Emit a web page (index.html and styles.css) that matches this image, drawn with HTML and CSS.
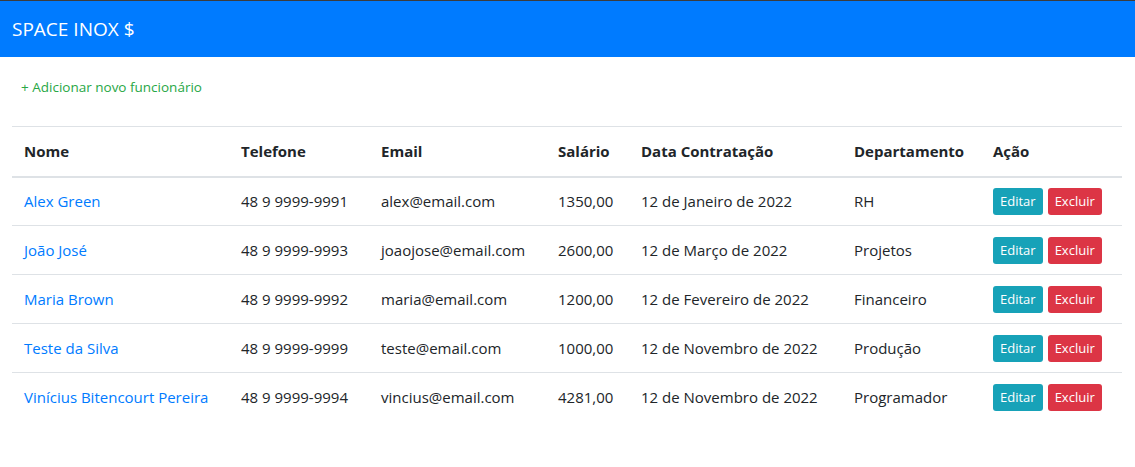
FILE: index.html
```html
<!DOCTYPE html>
<html lang="pt">
<head>
<meta charset="utf-8">
<title>Space Inox</title>
<link rel="stylesheet" href="styles.css">
</head>
<body>
<header class="navbar"><span class="brand">SPACE INOX $</span></header>
<main class="content">
  <a class="add-link" href="#">+ Adicionar novo funcionário</a>
  <table class="table">
    <colgroup>
      <col class="c1"><col class="c2"><col class="c3"><col class="c4"><col class="c5"><col class="c6"><col class="c7">
    </colgroup>
    <thead>
      <tr><th>Nome</th><th>Telefone</th><th>Email</th><th>Salário</th><th>Data Contratação</th><th>Departamento</th><th>Ação</th></tr>
    </thead>
    <tbody>
      <tr><td><a href="#">Alex Green</a></td><td>48 9 9999-9991</td><td>alex@email.com</td><td>1350,00</td><td>12 de Janeiro de 2022</td><td>RH</td><td class="actions"><button class="btn info">Editar</button><button class="btn danger">Excluir</button></td></tr>
      <tr><td><a href="#">João José</a></td><td>48 9 9999-9993</td><td>joaojose@email.com</td><td>2600,00</td><td>12 de Março de 2022</td><td>Projetos</td><td class="actions"><button class="btn info">Editar</button><button class="btn danger">Excluir</button></td></tr>
      <tr><td><a href="#">Maria Brown</a></td><td>48 9 9999-9992</td><td>maria@email.com</td><td>1200,00</td><td>12 de Fevereiro de 2022</td><td>Financeiro</td><td class="actions"><button class="btn info">Editar</button><button class="btn danger">Excluir</button></td></tr>
      <tr><td><a href="#">Teste da Silva</a></td><td>48 9 9999-9999</td><td>teste@email.com</td><td>1000,00</td><td>12 de Novembro de 2022</td><td>Produção</td><td class="actions"><button class="btn info">Editar</button><button class="btn danger">Excluir</button></td></tr>
      <tr><td><a href="#">Vinícius Bitencourt Pereira</a></td><td>48 9 9999-9994</td><td>vincius@email.com</td><td>4281,00</td><td>12 de Novembro de 2022</td><td>Programador</td><td class="actions"><button class="btn info">Editar</button><button class="btn danger">Excluir</button></td></tr>
    </tbody>
  </table>
</main>
</body>
</html>
```
FILE: styles.css
```css
* { box-sizing: border-box; }
html, body { margin: 0; padding: 0; }
body {
  font-family: "Open Sans", "Noto Sans", sans-serif;
  font-size: 15px;
  color: #212529;
  background: #fff;
  border-top: 1px solid #3c3c3c;
}
.navbar {
  background: #007bff;
  height: 56px;
  display: flex;
  align-items: center;
  padding: 0 12px;
}
.brand {
  color: #fff;
  font-size: 19px;
}
.content {
  padding: 20px 13px 0 12px;
}
.add-link {
  display: block;
  margin-left: 9px;
  color: #28a745;
  font-size: 13.5px;
  text-decoration: none;
  line-height: 20px;
}
.table {
  margin-top: 29px;
  width: 100%;
  border-collapse: collapse;
  table-layout: fixed;
}
.c1 { width: 217px; }
.c2 { width: 140px; }
.c3 { width: 177px; }
.c4 { width: 83px; }
.c5 { width: 213px; }
.c6 { width: 139px; }
.c7 { width: 141px; }
.table th, .table td {
  text-align: left;
  padding: 0 12px;
  vertical-align: middle;
  border-top: 1px solid #dee2e6;
  white-space: nowrap;
}
.table th {
  height: 50px;
  font-weight: 700;
  border-bottom: 2px solid #dee2e6;
}
.table td { height: 49px; }
.table a { color: #007bff; text-decoration: none; }
.btn {
  font-family: inherit;
  font-size: 13px;
  color: #fff;
  border: 0;
  border-radius: 3px;
  height: 27px;
  padding: 0 7px;
  margin-right: 5px;
  cursor: pointer;
}
.info { background: #17a2b8; }
.danger { background: #dc3545; }
```
